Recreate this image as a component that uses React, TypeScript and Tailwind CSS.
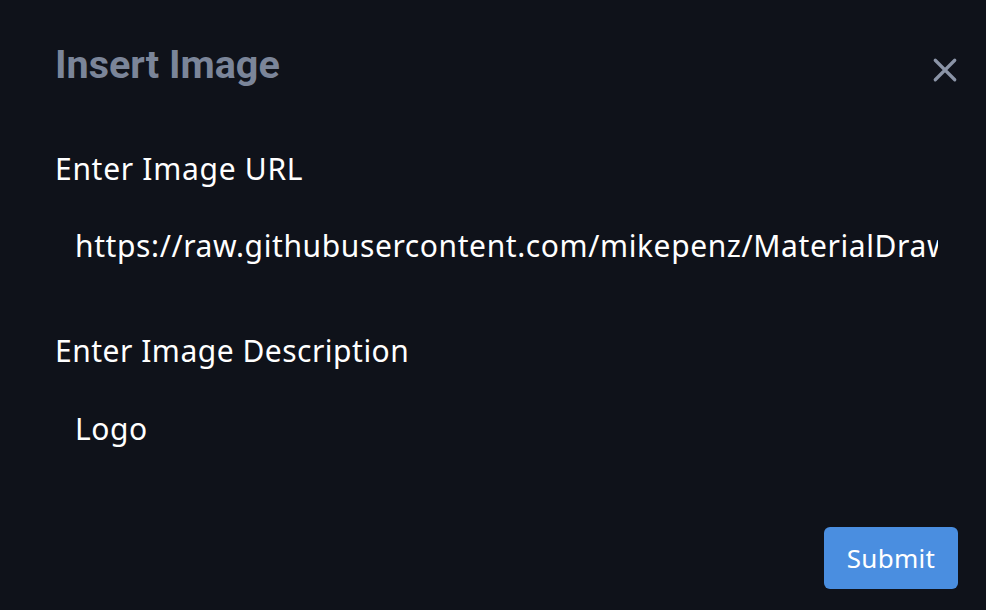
export default function App() {
  return (
    <div className="min-h-screen w-full bg-[#0f121a] text-white">
      <div className="flex flex-col px-[55px] pr-[28px]">
        <div className="flex items-start justify-between pt-[40px]">
          <h2 className="font-['Roboto',sans-serif] text-[39.5px] font-bold leading-[50px] text-[#7b8599]">
            Insert Image
          </h2>
          <button className="mt-[17px] text-[#8b94a7]" aria-label="Close">
            <svg width="26" height="26" viewBox="0 0 24 24" fill="none" stroke="currentColor" strokeWidth="3" strokeLinecap="round">
              <path d="M3 3l18 18M21 3L3 21" />
            </svg>
          </button>
        </div>

        <div className="flex flex-col font-['Noto_Sans',sans-serif]">
          <label className="mt-[59px] text-[30px] leading-[40px] tracking-[0.7px]">Enter Image URL</label>
          <input
            readOnly
            className="mt-[37px] w-[883px] bg-transparent pl-[20px] pr-0 text-[30px] leading-[40px] tracking-[0.6px] text-white outline-none"
            value="https://raw.githubusercontent.com/mikepenz/MaterialDrawer/develop/art/logo.png"
          />
          <label className="mt-[65px] text-[30px] leading-[40px] tracking-[0.5px]">Enter Image Description</label>
          <input
            readOnly
            className="mt-[38px] w-[883px] bg-transparent pl-[20px] pr-0 text-[30px] leading-[40px] tracking-[0.6px] text-white outline-none"
            value="Logo"
          />
        </div>

        <div className="mt-[78px] flex justify-end">
          <button className="h-[62px] w-[134px] rounded-[6px] bg-[#4a8ee0] font-['Noto_Sans',sans-serif] text-[26px] tracking-[0.3px] text-white">
            Submit
          </button>
        </div>
      </div>
    </div>
  );
}
